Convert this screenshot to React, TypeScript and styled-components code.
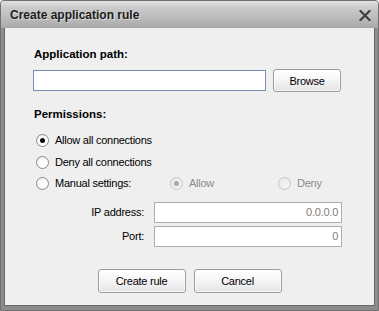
import React from 'react';
import styled, { createGlobalStyle } from 'styled-components';

const GlobalStyle = createGlobalStyle`
  html, body {
    margin: 0;
    padding: 0;
    background: #ffffff;
  }
  body {
    font-family: "Liberation Sans", Arial, sans-serif;
    font-size: 11px;
    letter-spacing: -0.25px;
    color: #000;
    -webkit-font-smoothing: none;
  }
`;

const Window = styled.div`
  width: 379px;
  height: 311px;
  box-sizing: border-box;
  display: flex;
  flex-direction: column;
  border: 1px solid #717171;
  border-radius: 4px 4px 0 0;
  background: #8c8c8c;
  overflow: hidden;
`;

const TitleBar = styled.div`
  height: 27px;
  flex: none;
  display: flex;
  align-items: center;
  justify-content: space-between;
  padding: 0 6px 0 9px;
  background: linear-gradient(#e2e2e2 0%, #cbcbcb 25%, #bcbcbc 60%, #a8a8a8 100%);
`;

const Title = styled.div`
  font-size: 12px;
  font-weight: bold;
  letter-spacing: 0;
  color: #1c1c1c;
  text-shadow: 1px 1px 0 rgba(255, 255, 255, 0.45);
  padding-top: 1px;
`;

const CloseButton = styled.div`
  width: 14px;
  height: 14px;
  display: flex;
  align-items: center;
  justify-content: center;
  margin-top: 1px;
`;

const Frame = styled.div`
  flex: 1;
  display: flex;
  padding: 0 3px 4px 3px;
`;

const Panel = styled.div`
  flex: 1;
  display: flex;
  flex-direction: column;
  background: #efefef;
  border: 1px solid #686868;
  border-top: none;
`;

const Form = styled.div`
  display: flex;
  flex-direction: column;
  padding: 19px 0 0 28px;
`;

const SectionLabel = styled.div<{ $top?: number }>`
  font-weight: bold;
  font-size: 11.5px;
  letter-spacing: 0;
  line-height: 14px;
  padding-left: 1px;
  margin-top: ${(p) => p.$top ?? 0}px;
`;

const PathRow = styled.div`
  display: flex;
  align-items: center;
  height: 23px;
  margin-top: 8px;
`;

const PathInput = styled.div`
  width: 233px;
  height: 21px;
  box-sizing: border-box;
  background: #fff;
  border: 1px solid #7a8db3;
`;

const Button = styled.div<{ $width: number; $height: number }>`
  width: ${(p) => p.$width}px;
  height: ${(p) => p.$height}px;
  box-sizing: border-box;
  display: flex;
  align-items: center;
  justify-content: center;
  border: 1px solid #9c9c9c;
  border-radius: 3px;
  background: linear-gradient(#ffffff 0%, #f6f6f6 45%, #e4e4e4 100%);
  box-shadow: inset 0 0 0 1px rgba(255, 255, 255, 0.7);
  color: #000;
`;

const BrowseButton = styled(Button)`
  margin-left: 7px;
`;

const RadioList = styled.div`
  display: flex;
  flex-direction: column;
  margin-top: 9px;
  padding-left: 3px;
`;

const RadioRow = styled.div`
  display: flex;
  align-items: center;
  height: 21.6px;
`;

const Option = styled.div<{ $width?: number }>`
  display: flex;
  align-items: center;
  gap: 6px;
  width: ${(p) => (p.$width ? `${p.$width}px` : 'auto')};
  flex: none;
`;

const Radio = styled.span<{ $checked?: boolean; $disabled?: boolean }>`
  width: 13px;
  height: 13px;
  box-sizing: border-box;
  border-radius: 50%;
  border: 1px solid ${(p) => (p.$disabled ? '#c6c6c6' : '#8a8a8a')};
  background: ${(p) =>
    p.$disabled
      ? 'radial-gradient(circle at 60% 60%, #f4f4f4, #e8e8e8)'
      : 'radial-gradient(circle at 60% 60%, #ffffff 40%, #e2e2e2)'};
  display: flex;
  align-items: center;
  justify-content: center;
  flex: none;

  &::after {
    content: '';
    display: ${(p) => (p.$checked ? 'block' : 'none')};
    width: 5px;
    height: 5px;
    border-radius: 50%;
    background: ${(p) => (p.$disabled ? '#a9a9a9' : '#0c0c0c')};
  }
`;

const OptionText = styled.span<{ $disabled?: boolean }>`
  color: ${(p) => (p.$disabled ? '#8b8b8b' : '#000')};
  line-height: 13px;
`;

const FieldRow = styled.div<{ $top: number }>`
  display: flex;
  align-items: center;
  gap: 10px;
  margin-top: ${(p) => p.$top}px;
`;

const FieldLabel = styled.div`
  width: 111px;
  text-align: right;
`;

const Field = styled.div`
  width: 188px;
  height: 21px;
  box-sizing: border-box;
  display: flex;
  align-items: center;
  justify-content: flex-end;
  padding-right: 3px;
  background: #fff;
  border: 1px solid #adadad;
  color: #7e7e7e;
`;

const ButtonBar = styled.div`
  display: flex;
  justify-content: center;
  gap: 8px;
  margin-top: 22px;
`;

const CloseIcon = () => (
  <svg width="12" height="11" viewBox="0 0 12 11">
    <path d="M1.5 1 L10.5 10 M10.5 1 L1.5 10" stroke="#3f3f3f" strokeWidth="2.2" strokeLinecap="square" />
  </svg>
);

const App: React.FC = () => {
  return (
    <>
      <GlobalStyle />
      <Window>
        <TitleBar>
          <Title>Create application rule</Title>
          <CloseButton>
            <CloseIcon />
          </CloseButton>
        </TitleBar>
        <Frame>
          <Panel>
            <Form>
              <SectionLabel>Application path:</SectionLabel>
              <PathRow>
                <PathInput />
                <BrowseButton $width={68} $height={23}>Browse</BrowseButton>
              </PathRow>

              <SectionLabel $top={15}>Permissions:</SectionLabel>
              <RadioList>
                <RadioRow>
                  <Option>
                    <Radio $checked />
                    <OptionText>Allow all connections</OptionText>
                  </Option>
                </RadioRow>
                <RadioRow>
                  <Option>
                    <Radio />
                    <OptionText>Deny all connections</OptionText>
                  </Option>
                </RadioRow>
                <RadioRow>
                  <Option $width={134}>
                    <Radio />
                    <OptionText>Manual settings:</OptionText>
                  </Option>
                  <Option $width={108}>
                    <Radio $checked $disabled />
                    <OptionText $disabled>Allow</OptionText>
                  </Option>
                  <Option>
                    <Radio $disabled />
                    <OptionText $disabled>Deny</OptionText>
                  </Option>
                </RadioRow>
              </RadioList>

              <FieldRow $top={7}>
                <FieldLabel>IP address:</FieldLabel>
                <Field>0.0.0.0</Field>
              </FieldRow>
              <FieldRow $top={3}>
                <FieldLabel>Port:</FieldLabel>
                <Field>0</Field>
              </FieldRow>
            </Form>

            <ButtonBar>
              <Button $width={88} $height={24}>Create rule</Button>
              <Button $width={88} $height={24}>Cancel</Button>
            </ButtonBar>
          </Panel>
        </Frame>
      </Window>
    </>
  );
};

export default App;
